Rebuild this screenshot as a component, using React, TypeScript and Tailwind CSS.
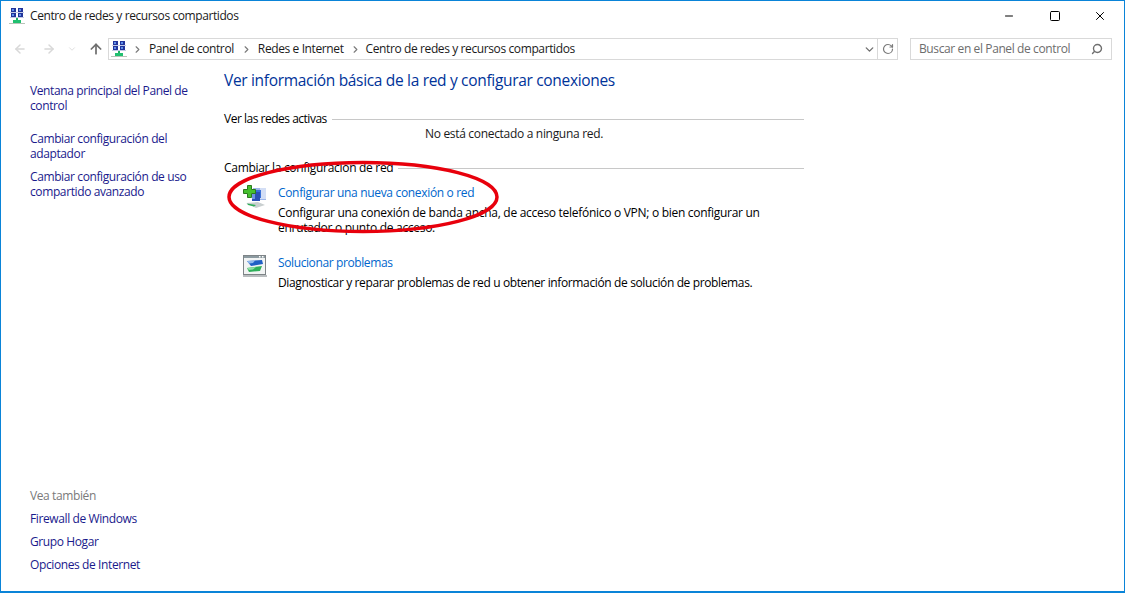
import React from "react";
import { ArrowLeft, ArrowRight, ArrowUp, ChevronDown, ChevronRight, RotateCw, Search, Minus, Square, X } from "lucide-react";

function NetIcon() {
  return (
    <svg width="16" height="16" viewBox="0 0 16 16" className="shrink-0">
      <rect x="2" y="0" width="5" height="4" fill="#22349a" />
      <rect x="9" y="0" width="5" height="4" fill="#22349a" />
      <rect x="3" y="1" width="2" height="2" fill="#5f8fe8" />
      <rect x="10" y="1" width="2" height="2" fill="#5f8fe8" />
      <rect x="2" y="5" width="5" height="4" fill="#22349a" />
      <rect x="9" y="5" width="5" height="4" fill="#22349a" />
      <rect x="3" y="6" width="2" height="2" fill="#5f8fe8" />
      <rect x="10" y="6" width="2" height="2" fill="#5f8fe8" />
      <rect x="1" y="4" width="14" height="1" fill="#c3cbe6" />
      <rect x="1" y="9" width="14" height="1" fill="#c3cbe6" />
      <rect x="7" y="10" width="2" height="3" fill="#20b060" />
      <rect x="4" y="12" width="8" height="3" fill="#20c070" />
      <rect x="0" y="15" width="16" height="1" fill="#b8c4b8" />
    </svg>
  );
}

function SetupIcon() {
  return (
    <svg width="24" height="24" viewBox="0 0 24 24" className="shrink-0">
      <rect x="10" y="3" width="13" height="12" fill="#9db6ea" />
      <rect x="17" y="3" width="6" height="11" fill="#d3def5" />
      <rect x="12" y="5" width="6" height="8" fill="#3a70d8" />
      <rect x="9" y="7" width="8" height="9" fill="#2b4fb5" />
      <rect x="9" y="9" width="3" height="5" fill="#6d93e0" />
      <path d="M3 18 L15 17 L22 20 L13 23 Z" fill="#c9cfd0" />
      <path d="M4 18.5 L13 20 L11 21.5 L5 20 Z" fill="#2fae58" />
      <path d="M4.5 0.5h4v4h4v4h-4v4h-4v-4h-4v-4h4z" fill="#46c02e" stroke="#2b7a1e" />
    </svg>
  );
}

function TroubleIcon() {
  return (
    <svg width="24" height="22" viewBox="0 0 24 22" className="shrink-0">
      <rect x="0.5" y="0.5" width="22" height="19" fill="#f2f4f4" stroke="#7e8487" />
      <rect x="1" y="1" width="21" height="2" fill="#8c9aa0" />
      <rect x="16" y="1" width="1.5" height="1.5" fill="#fff" />
      <rect x="19" y="1" width="1.5" height="1.5" fill="#fff" />
      <path d="M4 6 L19 5 L20 9 L8 11 Z" fill="#1f5fc4" />
      <path d="M4 6 L12 5.6 L10 8 L6 8.5 Z" fill="#8fb8ee" />
      <path d="M4 13 L19 11 L17 16 L6 17 Z" fill="#2fb05a" />
      <path d="M4 13 L13 12 L10 14.5 L6 15 Z" fill="#8fe0a5" />
      <rect x="0" y="20" width="24" height="2" fill="#b9bdbf" />
    </svg>
  );
}

function SideLink({ children, className = "" }: { children: React.ReactNode; className?: string }) {
  return <a className={`block text-[#1a1a8c] leading-[15px] ${className}`}>{children}</a>;
}

export default function App() {
  return (
    <div className="relative h-[593px] w-[1125px] overflow-hidden bg-white border border-[#0a84d8] border-b-[2px] text-[12px] text-black font-['Open_Sans','Noto_Sans',sans-serif] tracking-[-0.39px]">
      <div className="flex h-[30px] items-center pl-[8px]">
        <NetIcon />
        <span className="ml-[5px] text-[#1a1a1a] tracking-[-0.41px]">Centro de redes y recursos compartidos</span>
        <div className="ml-auto flex h-full items-center text-black">
          <div className="flex w-[46px] justify-center"><Minus size={12} strokeWidth={1} absoluteStrokeWidth /></div>
          <div className="flex w-[46px] justify-center"><Square size={12} strokeWidth={1} absoluteStrokeWidth /></div>
          <div className="flex w-[46px] justify-center pr-[2px]"><X size={14} strokeWidth={1} absoluteStrokeWidth /></div>
        </div>
      </div>

      <div className="flex h-[22px] items-center mt-[7px] pl-[12px] pr-[12px]">
        <ArrowLeft size={14} className="text-[#d8d8d8]" strokeWidth={2.5} />
        <ArrowRight size={14} className="ml-[15px] text-[#d8d8d8]" strokeWidth={2.5} />
        <ChevronDown size={10} className="ml-[11px] text-[#d8d8d8]" strokeWidth={2} />
        <ArrowUp size={16} className="ml-[11px] text-[#6f6f6f]" strokeWidth={2.6} />
        <div className="ml-[4px] flex h-[22px] w-[790px] items-center border border-[#d9d9d9] pl-[2px]">
          <NetIcon />
          <ChevronRight size={11} className="ml-[5px] text-[#7a7a7a]" strokeWidth={2.5} />
          <span className="ml-[6px] text-[#1a1a1a]">Panel de control</span>
          <ChevronRight size={11} className="ml-[7px] text-[#7a7a7a]" strokeWidth={2.5} />
          <span className="ml-[6px] text-[#1a1a1a]">Redes e Internet</span>
          <ChevronRight size={11} className="ml-[6px] text-[#7a7a7a]" strokeWidth={2.5} />
          <span className="ml-[5px] text-[#1a1a1a]">Centro de redes y recursos compartidos</span>
          <div className="ml-auto flex h-full items-center">
            <ChevronDown size={13} className="mr-[1px] text-[#6f6f6f]" strokeWidth={2.5} />
            <div className="flex h-full w-[20px] items-center justify-center border-l border-[#d9d9d9]">
              <RotateCw size={12} className="text-[#7a7a7a]" strokeWidth={2.4} />
            </div>
          </div>
        </div>
        <div className="ml-[12px] flex h-[22px] flex-1 items-center justify-between border border-[#d9d9d9] pl-[8px] pr-[8px] text-[#6d6d6d]">
          <span>Buscar en el Panel de control</span>
          <Search size={12} className="-scale-x-100 text-[#6f6f6f]" strokeWidth={2.8} />
        </div>
      </div>

      <div className="flex h-[532px]">
        <aside className="flex w-[223px] shrink-0 flex-col pl-[29px] pr-[24px] pt-[23px] pb-[20px]">
          <SideLink>Ventana principal del Panel de control</SideLink>
          <SideLink className="mt-[18px]">Cambiar configuración del adaptador</SideLink>
          <SideLink className="mt-[8px]">Cambiar configuración de uso compartido avanzado</SideLink>
          <div className="mt-auto flex flex-col gap-[8px]">
            <span className="leading-[15px] text-[#7a7a7a]">Vea también</span>
            <SideLink>Firewall de Windows</SideLink>
            <SideLink>Grupo Hogar</SideLink>
            <SideLink>Opciones de Internet</SideLink>
          </div>
        </aside>
        <main className="w-[580px] pt-[9px]">
          <h1 className="text-[15.5px] font-normal leading-[22px] tracking-[-0.32px] text-[#003399]">Ver información básica de la red y configurar conexiones</h1>
          <div className="mt-[20px] flex items-center">
            <span className="leading-[15px] tracking-[-0.49px]">Ver las redes activas</span>
            <div className="ml-[5px] mt-[2px] h-px flex-1 bg-[#c8c8c8]" />
          </div>
          <p className="mt-[0px] text-center leading-[15px] text-[#1a1a1a] tracking-[-0.31px]">No está conectado a ninguna red.</p>
          <div className="mt-[19px] flex items-center">
            <span className="leading-[15px] tracking-[-0.3px]">Cambiar la configuración de red</span>
            <div className="ml-[5px] mt-[2px] h-px flex-1 bg-[#c8c8c8]" />
          </div>
          <div className="mt-[10px] flex pl-[19px]">
            <div className="w-[35px] shrink-0"><SetupIcon /></div>
            <div>
              <a className="block leading-[15px] text-[#0066cc] tracking-[-0.33px]">Configurar una nueva conexión o red</a>
              <p className="mt-[5px] w-[500px] leading-[15px] tracking-[-0.29px]">Configurar una conexión de banda ancha, de acceso telefónico o VPN; o bien configurar un enrutador o punto de acceso.</p>
            </div>
          </div>
          <div className="mt-[20px] flex pl-[19px]">
            <div className="w-[35px] shrink-0"><TroubleIcon /></div>
            <div>
              <a className="block leading-[15px] text-[#0066cc]">Solucionar problemas</a>
              <p className="mt-[5px] leading-[15px] tracking-[-0.367px]">Diagnosticar y reparar problemas de red u obtener información de solución de problemas.</p>
            </div>
          </div>
        </main>
      </div>

      <svg className="pointer-events-none absolute left-[222px] top-[155px]" width="285" height="85" viewBox="0 0 285 85">
        <ellipse cx="140" cy="41" rx="134" ry="34.5" fill="none" stroke="#e8000c" strokeWidth="3.5" />
      </svg>
    </div>
  );
}
